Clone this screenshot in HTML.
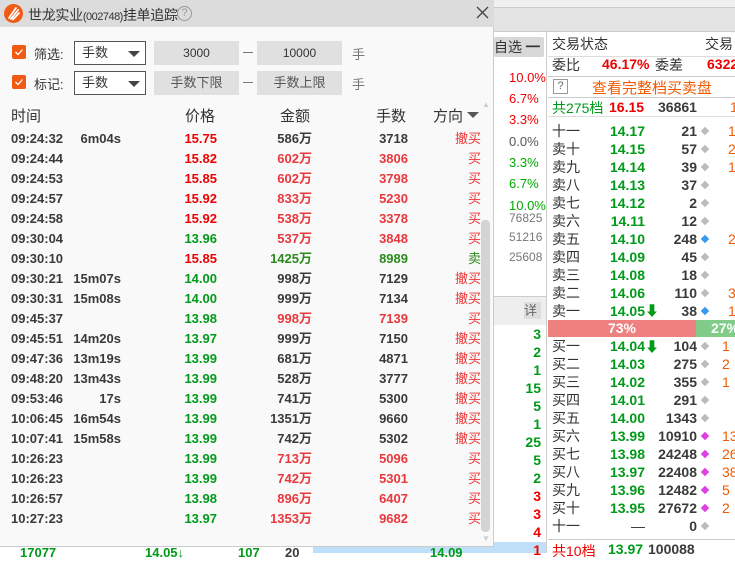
<!DOCTYPE html>
<html><head><meta charset="utf-8"><style>
*{margin:0;padding:0;box-sizing:border-box}
body{width:735px;height:553px;overflow:hidden;background:#fff;font-family:"Liberation Sans","Noto Sans CJK SC",sans-serif;position:relative;font-size:13px;color:#333}
.a{position:absolute;white-space:nowrap}
.b{font-weight:bold}
.r{color:#e00}.lr{color:#e8383d}.g{color:#009a1a}.dg{color:#3a3a3a}.or{color:#f05a00}
.dot{position:absolute;width:6px;height:6px;transform:rotate(45deg);background:#bbb}
.tri{position:absolute;left:53px;top:9px;width:0;height:0;border-left:6px solid transparent;border-right:6px solid transparent;border-top:6px solid #444}
</style></head><body>
<div class="a" style="left:490px;top:0;width:245px;height:8px;background:#f0f0f0;border-bottom:1px solid #ccc"></div>
<div class="a" style="left:490px;top:8px;width:245px;height:24px;background:#e4e4e4;border-bottom:1px solid #ccc"></div>
<div class="a" style="left:490px;top:32px;width:56px;height:521px;background:#fff"></div>
<div class="a" style="left:494px;top:37px;width:50px;height:20px;background:#d8d8d8;border-radius:2px;font-size:14px;line-height:20px;color:#333">自选 <b>━</b></div>
<div class="a" style="left:546px;top:30px;width:1px;height:523px;background:#ccc"></div>
<div class="a" style="left:548px;top:56px;width:187px;height:1px;background:#ddd"></div>
<div class="a" style="left:548px;top:76px;width:187px;height:1px;background:#ccc"></div>
<div class="a" style="left:548px;top:97px;width:187px;height:1px;background:#ccc"></div>
<div class="a" style="left:548px;top:116px;width:187px;height:1px;background:#ddd"></div>
<div class="a" style="left:552px;top:34px;font-size:14px;color:#333">交易状态</div>
<div class="a" style="left:705px;top:34px;font-size:14px;color:#333">交易</div>
<div class="a" style="left:552px;top:55px;font-size:14px;color:#333">委比</div>
<div class="a b r" style="left:602px;top:56px;font-size:14px">46.17%</div>
<div class="a" style="left:655px;top:55px;font-size:14px;color:#333">委差</div>
<div class="a b r" style="left:707px;top:56px;font-size:14px">6322</div>
<div class="a" style="left:553px;top:79px;width:15px;height:15px;border:1px solid #999;font-size:11px;line-height:13px;text-align:center;color:#666">?</div>
<div class="a or" style="left:592px;top:77px;font-size:15px">查看完整档买卖盘</div>
<div class="a g" style="left:552px;top:98px;font-size:14px">共275档</div>
<div class="a b r" style="left:609px;top:99px;font-size:14px">16.15</div>
<div class="a b dg" style="left:658px;top:99px;font-size:14px">36861</div>
<div class="a or" style="left:730px;top:99px;font-size:14px">1</div>
<div class="a" style="left:509px;top:70px;font-size:13px;color:#e00">10.0%</div>
<div class="a" style="left:509px;top:91px;font-size:13px;color:#e00">6.7%</div>
<div class="a" style="left:509px;top:112px;font-size:13px;color:#e00">3.3%</div>
<div class="a" style="left:509px;top:134px;font-size:13px;color:#555">0.0%</div>
<div class="a" style="left:509px;top:155px;font-size:13px;color:#0a0">3.3%</div>
<div class="a" style="left:509px;top:176px;font-size:13px;color:#0a0">6.7%</div>
<div class="a" style="left:509px;top:198px;font-size:13px;color:#0a0">10.0%</div>
<div class="a" style="left:509px;top:211px;font-size:12px;color:#777">76825</div>
<div class="a" style="left:509px;top:230px;font-size:12px;color:#777">51216</div>
<div class="a" style="left:509px;top:250px;font-size:12px;color:#777">25608</div>
<div class="a" style="left:490px;top:296px;width:56px;height:1px;background:#ccc"></div>
<div class="a" style="left:490px;top:297px;width:56px;height:28px;background:#eee"></div>
<div class="a" style="left:524px;top:302px;width:17px;height:17px;background:#ddd;font-size:13px;line-height:17px;color:#666">详</div>
<div class="a" style="left:490px;top:542px;width:56px;height:11px;background:#bfe0f8"></div>
<div class="a" style="left:313px;top:547px;width:233px;height:6px;background:#bfe0f8"></div>
<div class="a b g" style="left:500px;top:325px;width:41px;text-align:right;font-size:14px;line-height:18px">3<br>2<br>1<br>15<br>5<br>1<br>25<br>5<br>2<br><span class="r">3<br>3<br>4<br>1</span></div>
<div class="a" style="left:552px;top:122px;font-size:14px;line-height:18px;color:#333">十一<br>卖十<br>卖九<br>卖八<br>卖七<br>卖六<br>卖五<br>卖四<br>卖三<br>卖二<br>卖一</div>
<div class="a b g" style="left:600px;top:122px;width:45px;text-align:right;font-size:14px;line-height:18px">14.17<br>14.15<br>14.14<br>14.13<br>14.12<br>14.11<br>14.10<br>14.09<br>14.08<br>14.06<br>14.05</div>
<div class="a g" style="left:645px;top:301px;font-size:14px;font-weight:bold">⬇</div>
<div class="a b dg" style="left:650px;top:122px;width:47px;text-align:right;font-size:14px;line-height:18px">21<br>57<br>39<br>37<br>2<br>12<br>248<br>45<br>18<br>110<br>38</div>
<div class="a" style="left:728px;top:122px;font-size:14px;line-height:18px;color:#f05a00">1<br>2<br>1<br><br><br><br>2<br><br><br>3<br>1</div>
<div class="a" style="left:548px;top:320px;width:148px;height:17px;background:#ee8080;color:#fff;font-weight:bold;font-size:14px;line-height:17px;text-align:center">73%</div>
<div class="a" style="left:696px;top:320px;width:39px;height:17px;background:#80cc88;color:#fff;font-weight:bold;font-size:14px;line-height:17px;padding-left:15px">27%</div>
<div class="a" style="left:552px;top:337px;font-size:14px;line-height:18px;color:#333">买一<br>买二<br>买三<br>买四<br>买五<br>买六<br>买七<br>买八<br>买九<br>买十<br>十一</div>
<div class="a b g" style="left:600px;top:337px;width:45px;text-align:right;font-size:14px;line-height:18px">14.04<br>14.03<br>14.02<br>14.01<br>14.00<br>13.99<br>13.98<br>13.97<br>13.96<br>13.95<br><span style="color:#333;font-weight:normal">—</span></div>
<div class="a g" style="left:645px;top:337px;font-size:14px;font-weight:bold">⬇</div>
<div class="a b dg" style="left:640px;top:337px;width:57px;text-align:right;font-size:14px;line-height:18px">104<br>275<br>355<br>291<br>1343<br>10910<br>24248<br>22408<br>12482<br>27672<br>0</div>
<div class="a" style="left:722px;top:337px;font-size:14px;line-height:18px;color:#f05a00">1<br>2<br>1<br><br><br>13<br>26<br>38<br>5<br>2</div>
<div class="a" style="left:548px;top:539px;width:187px;height:1px;background:#ccc"></div>
<div class="a" style="left:552px;top:541px;font-size:14px;color:#e00">共10档</div>
<div class="a b g" style="left:608px;top:541px;font-size:14px">13.97</div>
<div class="a b dg" style="left:648px;top:541px;font-size:14px">100088</div>
<div class="dot" style="left:702px;top:128px"></div><div class="dot" style="left:702px;top:146px"></div><div class="dot" style="left:702px;top:164px"></div><div class="dot" style="left:702px;top:182px"></div><div class="dot" style="left:702px;top:200px"></div><div class="dot" style="left:702px;top:218px"></div><div class="dot" style="left:702px;top:236px;background:#3a9af0"></div><div class="dot" style="left:702px;top:254px"></div><div class="dot" style="left:702px;top:272px"></div><div class="dot" style="left:702px;top:290px"></div><div class="dot" style="left:702px;top:308px;background:#3a9af0"></div>
<div class="dot" style="left:702px;top:343px"></div><div class="dot" style="left:702px;top:361px"></div><div class="dot" style="left:702px;top:379px"></div><div class="dot" style="left:702px;top:397px"></div><div class="dot" style="left:702px;top:415px"></div><div class="dot" style="left:702px;top:433px;background:#e040e0"></div><div class="dot" style="left:702px;top:451px;background:#e040e0"></div><div class="dot" style="left:702px;top:469px;background:#e040e0"></div><div class="dot" style="left:702px;top:487px;background:#e040e0"></div><div class="dot" style="left:702px;top:505px;background:#e040e0"></div><div class="dot" style="left:702px;top:523px"></div>
<div class="a b g" style="left:20px;top:545px;font-size:13px">17077</div>
<div class="a b g" style="left:145px;top:545px;font-size:13px">14.05↓</div>
<div class="a b g" style="left:238px;top:545px;font-size:13px">107</div>
<div class="a b dg" style="left:285px;top:545px;font-size:13px">20</div>
<div class="a b g" style="left:430px;top:545px;font-size:13px">14.09</div>

<div class="a" style="left:0;top:0;width:494px;height:547px;background:#f9f9f9;border-right:1px solid #ccc;border-bottom:1px solid #ccc">
 <div class="a" style="left:0;top:0;width:494px;height:27px;background:#dcdcdc"></div>
 <svg class="a" style="left:4px;top:4px" width="19" height="19" viewBox="0 0 19 19"><circle cx="9.5" cy="9.5" r="9.5" fill="#f05a14"/><path d="M5 14 L12 4 M7 15 L14 6 M9 15.5 L15 9" stroke="#fff" stroke-width="1.8" fill="none" stroke-linecap="round"/></svg>
 <div class="a" style="left:28px;top:5px;font-size:14px;color:#333;letter-spacing:-0.3px">世龙实业<span style="font-size:11px;letter-spacing:-0.5px">(002748)</span>挂单追踪</div>
 <div class="a" style="left:177px;top:6px;width:15px;height:15px;border:1px solid #999;border-radius:50%;font-size:11px;line-height:13px;text-align:center;color:#999">?</div>
 <svg class="a" style="left:476px;top:6px" width="13" height="13"><path d="M1 1L12 12M12 1L1 12" stroke="#444" stroke-width="1.3"/></svg>

 <div class="a" style="left:12px;top:45px;width:14px;height:14px;background:#f05a14;border-radius:2px"><svg width="14" height="14"><path d="M3.5 7 L6 9.5 L10.5 4.5" stroke="#fff" stroke-width="1.3" fill="none"/></svg></div>
 <div class="a" style="left:34px;top:44px;font-size:13px;color:#333">筛选:</div>
 <div class="a" style="left:74px;top:41px;width:72px;height:24px;border:1px solid #555;background:#fff;font-size:13px;line-height:22px;padding-left:7px">手数<span class="tri"></span></div>
 <div class="a" style="left:154px;top:41px;width:85px;height:24px;background:#e0e0e0;font-size:12px;line-height:24px;text-align:center;color:#333">3000</div>
 <div class="a" style="left:243px;top:52px;width:10px;height:1px;background:#777"></div>
 <div class="a" style="left:257px;top:41px;width:85px;height:24px;background:#e0e0e0;font-size:12px;line-height:24px;text-align:center;color:#333">10000</div>
 <div class="a" style="left:352px;top:44px;color:#777">手</div>

 <div class="a" style="left:12px;top:75px;width:14px;height:14px;background:#f05a14;border-radius:2px"><svg width="14" height="14"><path d="M3.5 7 L6 9.5 L10.5 4.5" stroke="#fff" stroke-width="1.3" fill="none"/></svg></div>
 <div class="a" style="left:34px;top:74px;font-size:13px;color:#333">标记:</div>
 <div class="a" style="left:74px;top:71px;width:72px;height:24px;border:1px solid #555;background:#fff;font-size:13px;line-height:22px;padding-left:7px">手数<span class="tri"></span></div>
 <div class="a" style="left:154px;top:71px;width:85px;height:24px;background:#e0e0e0;font-size:13px;line-height:24px;text-align:center;color:#555">手数下限</div>
 <div class="a" style="left:243px;top:82px;width:10px;height:1px;background:#777"></div>
 <div class="a" style="left:257px;top:71px;width:85px;height:24px;background:#e0e0e0;font-size:13px;line-height:24px;text-align:center;color:#555">手数上限</div>
 <div class="a" style="left:352px;top:74px;color:#777">手</div>

 <div class="a" style="left:11px;top:105px;font-size:15px;color:#333">时间</div>
 <div class="a" style="left:185px;top:105px;font-size:15px;color:#333">价格</div>
 <div class="a" style="left:280px;top:105px;font-size:15px;color:#333">金额</div>
 <div class="a" style="left:376px;top:105px;font-size:15px;color:#333">手数</div>
 <div class="a" style="left:433px;top:105px;font-size:15px;color:#333">方向</div>
 <div class="a" style="left:467px;top:112px;width:0;height:0;border-left:6px solid transparent;border-right:6px solid transparent;border-top:6px solid #555"></div>
 <div class="a" style="left:482px;top:100px;font-size:8px;color:#ccc">▲</div>
 <div class="a" style="left:481px;top:220px;width:9px;height:312px;background:#d4d4d4;border-radius:4px"></div>
 <div class="a" style="left:482px;top:534px;font-size:8px;color:#ccc">▼</div>

 <div class="a b dg" style="left:11px;top:129px;font-size:13px;line-height:20px">09:24:32<br>09:24:44<br>09:24:53<br>09:24:57<br>09:24:58<br>09:30:04<br>09:30:10<br>09:30:21<br>09:30:31<br>09:45:37<br>09:45:51<br>09:47:36<br>09:48:20<br>09:53:46<br>10:06:45<br>10:07:41<br>10:26:23<br>10:26:23<br>10:26:57<br>10:27:23</div>
 <div class="a b dg" style="left:60px;top:129px;width:61px;text-align:right;font-size:13px;line-height:20px">6m04s<br><br><br><br><br><br><br>15m07s<br>15m08s<br><br>14m20s<br>13m19s<br>13m43s<br>17s<br>16m54s<br>15m58s</div>
 <div class="a b" style="left:160px;top:129px;width:57px;text-align:right;font-size:13px;line-height:20px"><span class="r">15.75<br>15.82<br>15.85<br>15.92<br>15.92</span><br><span class="g">13.96</span><br><span class="r">15.85</span><br><span class="g">14.00<br>14.00<br>13.98<br>13.97<br>13.99<br>13.99<br>13.99<br>13.99<br>13.99<br>13.99<br>13.99<br>13.98<br>13.97</span></div>
 <div class="a b" style="left:240px;top:129px;width:72px;text-align:right;font-size:13px;line-height:20px"><span class="dg">586万</span><br><span class="lr">602万<br>602万<br>833万<br>538万<br>537万</span><br><span style="color:#2a8a1a">1425万</span><br><span class="dg">998万<br>999万</span><br><span class="lr">998万</span><br><span class="dg">999万<br>681万<br>528万<br>741万<br>1351万<br>742万</span><br><span class="lr">713万<br>742万<br>896万<br>1353万</span></div>
 <div class="a b" style="left:340px;top:129px;width:68px;text-align:right;font-size:13px;line-height:20px"><span class="dg">3718</span><br><span class="lr">3806<br>3798<br>5230<br>3378<br>3848</span><br><span style="color:#2a8a1a">8989</span><br><span class="dg">7129<br>7134</span><br><span class="lr">7139</span><br><span class="dg">7150<br>4871<br>3777<br>5300<br>9660<br>5302</span><br><span class="lr">5096<br>5301<br>6407<br>9682</span></div>
 <div class="a" style="left:420px;top:129px;width:61px;text-align:right;font-size:13px;line-height:20px;color:#ee3333">撤买<br>买<br>买<br>买<br>买<br>买<br><span style="color:#2a8a1a">卖</span><br>撤买<br>撤买<br>买<br>撤买<br>撤买<br>撤买<br>撤买<br>撤买<br>撤买<br>买<br>买<br>买<br>买</div>
</div>
</body></html>
